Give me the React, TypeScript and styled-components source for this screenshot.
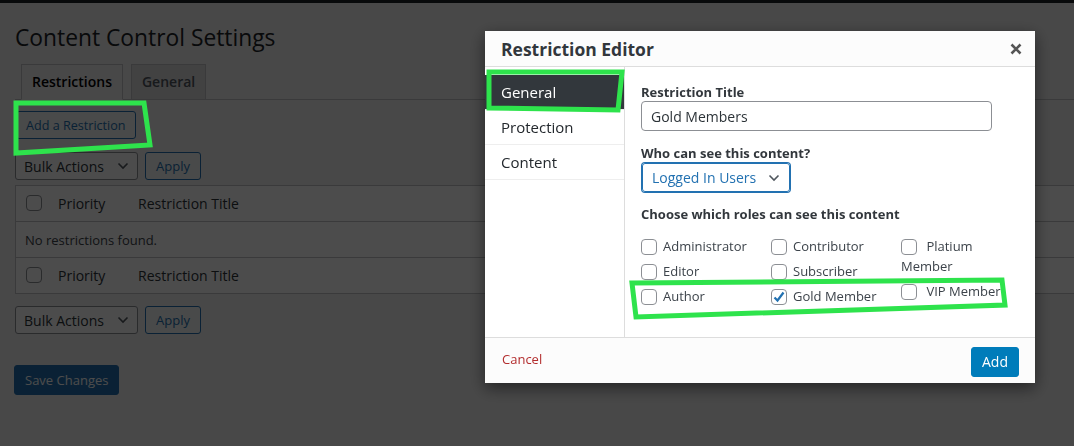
import React from 'react';
import styled, {createGlobalStyle} from 'styled-components';

const GlobalStyle = createGlobalStyle`
  html, body {
    margin: 0;
    padding: 0;
  }
  body {
    background: #f0f0f1;
    font-family: "Open Sans", "Noto Sans", Arial, sans-serif;
    font-size: 13px;
    color: #3c434a;
    overflow: hidden;
  }
`;

const roleColumns: {label: string; checked?: boolean}[][] = [
  [{label: 'Administrator'}, {label: 'Editor'}, {label: 'Author'}],
  [{label: 'Contributor'}, {label: 'Subscriber'}, {label: 'Gold Member', checked: true}],
  [{label: 'Platium Member'}, {label: 'VIP Member'}],
];

const Chevron = () => (
  <svg width="12" height="8" viewBox="0 0 12 8">
    <path d="M1.5 1.5 L6 6 L10.5 1.5" fill="none" stroke="#50575e" strokeWidth="1.6" />
  </svg>
);

const App = () => {
  return (
    <>
      <GlobalStyle />
      <AdminBar />
      <Wrap>
        <PageTitle>Content Control Settings</PageTitle>
        <TabBar>
          <Tab active>Restrictions</Tab>
          <Tab>General</Tab>
        </TabBar>
        <AddButton>Add a Restriction</AddButton>
        <BulkRow>
          <BulkSelect>
            <span>Bulk Actions</span>
            <Chevron />
          </BulkSelect>
          <SecondaryButton>Apply</SecondaryButton>
        </BulkRow>
        <Table>
          <TableRow head>
            <CheckCell>
              <Box />
            </CheckCell>
            <PriorityCell>Priority</PriorityCell>
            <span>Restriction Title</span>
          </TableRow>
          <EmptyRow>No restrictions found.</EmptyRow>
          <TableRow>
            <CheckCell>
              <Box />
            </CheckCell>
            <PriorityCell>Priority</PriorityCell>
            <span>Restriction Title</span>
          </TableRow>
        </Table>
        <BulkRow bottom>
          <BulkSelect>
            <span>Bulk Actions</span>
            <Chevron />
          </BulkSelect>
          <SecondaryButton>Apply</SecondaryButton>
        </BulkRow>
        <SaveButton>Save Changes</SaveButton>
      </Wrap>

      <Backdrop />

      <Modal>
        <ModalHeader>
          <ModalTitle>Restriction Editor</ModalTitle>
          <CloseButton>
            <svg width="12" height="12" viewBox="0 0 12 12">
              <path d="M1.5 1.5 L10.5 10.5 M10.5 1.5 L1.5 10.5" stroke="#555" strokeWidth="2.6" />
            </svg>
          </CloseButton>
        </ModalHeader>
        <ModalBody>
          <Sidebar>
            <SideItem active>General</SideItem>
            <SideItem>Protection</SideItem>
            <SideItem>Content</SideItem>
          </Sidebar>
          <Panel>
            <FieldLabel>Restriction Title</FieldLabel>
            <TextInput>Gold Members</TextInput>
            <FieldLabel spaced>Who can see this content?</FieldLabel>
            <WhoSelect>
              <span>Logged In Users</span>
              <Chevron />
            </WhoSelect>
            <FieldLabel spaced>Choose which roles can see this content</FieldLabel>
            <RoleGrid>
              {roleColumns.map((col, ci) => (
                <RoleColumn key={ci}>
                  {col.map(role => (
                    <RoleItem key={role.label}>
                      <Box checked={role.checked}>
                        {role.checked && (
                          <svg width="16" height="16" viewBox="0 0 16 16">
                            <path d="M3.5 8.5 L6.5 11.5 L12.5 3.5" fill="none" stroke="#2271b1" strokeWidth="2.2" />
                          </svg>
                        )}
                      </Box>
                      {ci === 2 ? ' ' : ''}
                      {role.label}
                    </RoleItem>
                  ))}
                </RoleColumn>
              ))}
            </RoleGrid>
          </Panel>
        </ModalBody>
        <ModalFooter>
          <CancelLink>Cancel</CancelLink>
          <PrimaryButton>Add</PrimaryButton>
        </ModalFooter>
      </Modal>

      <Annotations width="1074" height="446" viewBox="0 0 1074 446">
        <polygon points="16,103 144,103 150,145 16,153" />
        <polygon points="489,72 622,72 618,110 489,108" />
        <polygon points="632,283 1002,280 1005,305 636,317" />
      </Annotations>
    </>
  );
};

export default App;

const AdminBar = styled.div`
  height: 3px;
  background: #1d2327;
`;

const Wrap = styled.div`
  padding: 0 0 0 15px;
`;

const PageTitle = styled.h1`
  margin: 0;
  padding-top: 20px;
  font-size: 22.8px;
  font-weight: 400;
  line-height: 29px;
  color: #1d2327;
`;

const TabBar = styled.div`
  display: flex;
  gap: 8px;
  margin-top: 12px;
  padding-left: 6px;
  border-bottom: 1px solid #c3c4c7;
`;

const Tab = styled.div<{active?: boolean}>`
  padding: 5px 10px;
  margin-bottom: -1px;
  font-size: 14px;
  font-weight: 600;
  line-height: 24px;
  color: ${p => (p.active ? '#000' : '#50575e')};
  background: ${p => (p.active ? '#f0f0f1' : '#dcdcde')};
  border: 1px solid #c3c4c7;
  border-bottom-color: ${p => (p.active ? '#f0f0f1' : '#c3c4c7')};
`;

const SecondaryButton = styled.div`
  display: inline-flex;
  align-items: center;
  height: 28px;
  box-sizing: border-box;
  padding: 0 10px;
  font-size: 13px;
  color: #2271b1;
  background: #f6f7f7;
  border: 1px solid #2271b1;
  border-radius: 3px;
`;

const AddButton = styled(SecondaryButton)`
  margin: 11px 0 0 1px;
  padding: 0 9px;
  font-size: 12.6px;
`;

const BulkRow = styled.div<{bottom?: boolean}>`
  display: flex;
  gap: 7px;
  margin-top: ${p => (p.bottom ? '12px' : '13px')};
`;

const BulkSelect = styled.div`
  width: 123px;
  height: 28px;
  box-sizing: border-box;
  display: flex;
  align-items: center;
  justify-content: space-between;
  padding: 0 8px 0 8px;
  font-size: 14px;
  color: #2c3338;
  background: #fff;
  border: 1px solid #8c8f94;
  border-radius: 3px;
`;

const Table = styled.div`
  margin-top: 5px;
  margin-right: -2px;
  background: #fff;
  border: 1px solid #c3c4c7;
`;

const TableRow = styled.div<{head?: boolean}>`
  height: 35px;
  display: flex;
  align-items: center;
  padding-left: 10px;
  font-size: 14px;
  color: #2c3338;
  border-bottom: ${p => (p.head ? '1px solid #c3c4c7' : 'none')};
`;

const EmptyRow = styled.div`
  height: 35px;
  display: flex;
  align-items: center;
  padding-left: 9px;
  font-size: 13px;
  color: #3c434a;
  border-bottom: 1px solid #c3c4c7;
`;

const CheckCell = styled.div`
  width: 32px;
  display: flex;
  align-items: center;
`;

const PriorityCell = styled.div`
  width: 80px;
`;

const Box = styled.span<{checked?: boolean}>`
  display: inline-block;
  width: 16px;
  height: 16px;
  box-sizing: border-box;
  border: 1px solid #8c8f94;
  border-radius: 4px;
  background: #fff;
  vertical-align: middle;
  position: relative;
  top: -1px;
  svg {
    display: block;
    margin: -1px 0 0 -1px;
  }
`;

const SaveButton = styled.div`
  display: inline-flex;
  align-items: center;
  height: 30px;
  box-sizing: border-box;
  margin: 31px 0 0 -1px;
  padding: 0 10px;
  font-size: 13px;
  color: #fff;
  background: #2271b1;
  border: 1px solid #2271b1;
  border-radius: 3px;
`;

const Backdrop = styled.div`
  position: fixed;
  inset: 0;
  background: rgba(0, 0, 0, 0.7);
`;

const Modal = styled.div`
  position: fixed;
  left: 485px;
  top: 31px;
  width: 550px;
  height: 352px;
  display: flex;
  flex-direction: column;
  background: #fff;
  box-shadow: 0 5px 15px rgba(0, 0, 0, 0.5);
`;

const ModalHeader = styled.div`
  height: 35px;
  flex: none;
  display: flex;
  align-items: center;
  justify-content: space-between;
  padding: 0 13px 0 16px;
  background: #fcfcfc;
  border-bottom: 1px solid #ddd;
`;

const ModalTitle = styled.div`
  font-size: 17.5px;
  font-weight: 700;
  color: #32373c;
`;

const CloseButton = styled.div`
  display: flex;
`;

const ModalBody = styled.div`
  flex: 1;
  display: flex;
  min-height: 0;
`;

const Sidebar = styled.div`
  width: 139px;
  padding-top: 8px;
  border-right: 1px solid #ddd;
`;

const SideItem = styled.div<{active?: boolean}>`
  height: 34px;
  display: flex;
  align-items: center;
  padding-left: 16px;
  font-size: 15px;
  color: ${p => (p.active ? '#fff' : '#23282d')};
  background: ${p => (p.active ? '#32373c' : '#fff')};
  border-bottom: 1px solid #eee;
`;

const Panel = styled.div`
  flex: 1;
  padding: 17px 16px 0;
`;

const FieldLabel = styled.div<{spaced?: boolean}>`
  margin-top: ${p => (p.spaced ? '14px' : '0')};
  font-size: 13px;
  font-weight: 700;
  line-height: 17px;
  color: #32373c;
`;

const TextInput = styled.div`
  width: 351px;
  height: 30px;
  box-sizing: border-box;
  display: flex;
  align-items: center;
  padding: 0 9px;
  font-size: 14px;
  color: #2c3338;
  border: 1px solid #8c8f94;
  border-radius: 4px;
`;

const WhoSelect = styled.div`
  width: 148px;
  height: 29px;
  box-sizing: border-box;
  margin: 1px 0 0 1px;
  display: flex;
  align-items: center;
  justify-content: space-between;
  padding: 0 9px 0 9px;
  font-size: 14px;
  color: #2271b1;
  border: 1px solid #2271b1;
  box-shadow: 0 0 0 1px #2271b1;
  border-radius: 3px;
`;

const RoleGrid = styled.div`
  display: grid;
  grid-template-columns: 130px 130px 105px;
  margin-top: 13px;
`;

const RoleColumn = styled.div`
  display: flex;
  flex-direction: column;
  gap: 5px;
`;

const RoleItem = styled.div`
  font-size: 13px;
  line-height: 20px;
  color: #3c434a;
  ${Box} {
    margin-right: 6px;
  }
`;

const ModalFooter = styled.div`
  height: 45px;
  flex: none;
  display: flex;
  align-items: center;
  justify-content: space-between;
  padding: 0 16px 0 17px;
  background: #fcfcfc;
  border-top: 1px solid #ddd;
`;

const CancelLink = styled.span`
  font-size: 13px;
  color: #b32d2e;
  margin-top: -4px;
`;

const PrimaryButton = styled.div`
  height: 30px;
  box-sizing: border-box;
  display: flex;
  align-items: center;
  padding: 0 10px;
  margin-top: 2px;
  font-size: 14px;
  color: #fff;
  background: #007cba;
  border: 1px solid #007cba;
  border-radius: 3px;
`;

const Annotations = styled.svg`
  position: fixed;
  left: 0;
  top: 0;
  pointer-events: none;
  polygon {
    fill: none;
    stroke: #2ee34c;
    stroke-width: 5;
    stroke-linejoin: miter;
  }
`;
